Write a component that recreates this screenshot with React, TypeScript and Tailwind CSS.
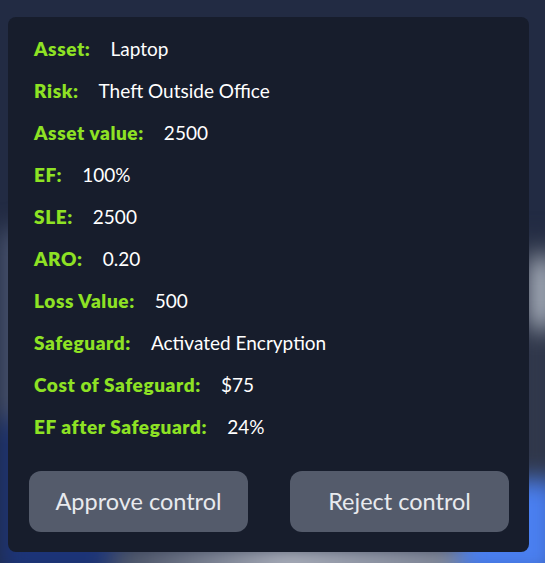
const rows: [string, string][] = [
  ['Asset:', 'Laptop'],
  ['Risk:', 'Theft Outside Office'],
  ['Asset value:', '2500'],
  ['EF:', '100%'],
  ['SLE:', '2500'],
  ['ARO:', '0.20'],
  ['Loss Value:', '500'],
  ['Safeguard:', 'Activated Encryption'],
  ['Cost of Safeguard:', '$75'],
  ['EF after Safeguard:', '24%'],
];

export default function App() {
  return (
    <div
      className="relative w-[545px] h-[563px] overflow-hidden bg-[#222b43]"
      style={{ fontFamily: '"Lato", "Noto Sans", sans-serif' }}
    >
      {/* blurred scene behind the dialog */}
      <div className="absolute inset-0 blur-md">
        <div className="absolute left-0 top-[230px] w-[40px] h-[200px] bg-[#4a5570]" />
        <div className="absolute left-0 top-[420px] w-[120px] h-[160px] bg-[#1c3478]" />
        <div className="absolute left-[110px] top-[548px] w-[350px] h-[30px] bg-gradient-to-r from-[#4b5468] via-[#c4c8d2] to-[#8f96a6]" />
        <div className="absolute left-[460px] top-[480px] w-[100px] h-[100px] bg-[#4a7ff0]" />
        <div className="absolute left-[520px] top-[240px] w-[30px] h-[240px] bg-[#343b4d]" />
        <div className="absolute left-[532px] top-[258px] w-[20px] h-[70px] bg-[#d6dde6]" />
      </div>

      <div className="relative ml-2 mt-[17px] flex h-[535px] w-[521px] flex-col rounded-lg bg-[#171d2c] pl-[26px] pr-5 pt-[18px] pb-5">
        <div className="flex flex-col gap-[14px]">
          {rows.map(([label, value]) => (
            <div key={label} className="flex h-[28px] items-center text-[19px] leading-[28px]">
              <span className="font-extrabold tracking-[0.6px] text-[#8ee224]">{label}</span>
              <span className="ml-5 text-white">{value}</span>
            </div>
          ))}
        </div>

        <div className="mt-auto -ml-[5px] flex gap-[42px]">
          <button className="h-[61px] w-[219px] rounded-xl bg-[#545b6b] text-[23.5px] text-[#e8eaee]">
            Approve control
          </button>
          <button className="h-[61px] w-[219px] rounded-xl bg-[#545b6b] text-[23.5px] text-[#e8eaee]">
            Reject control
          </button>
        </div>
      </div>
    </div>
  );
}
